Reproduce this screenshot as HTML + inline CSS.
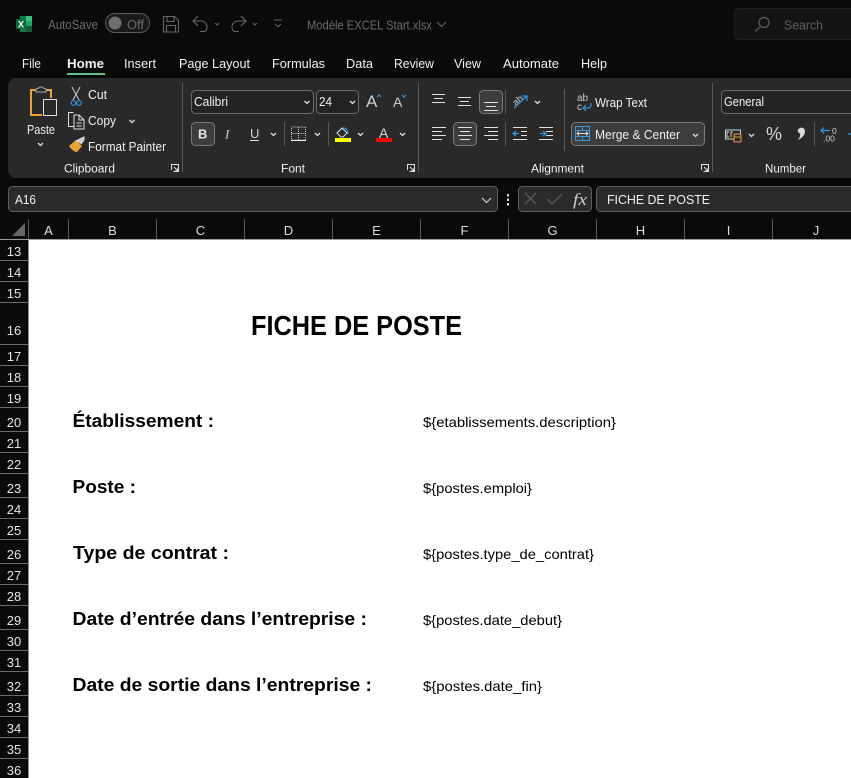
<!DOCTYPE html>
<html><head><meta charset="utf-8"><style>
html,body{margin:0;padding:0;background:#0a0a0a;width:851px;height:778px;overflow:hidden}
svg{display:block}
text{font-family:"Liberation Sans",sans-serif;fill:#f0f0f0;font-size:12px}
.d{fill:#6b6b6b}
.t{font-size:12.5px}
.g{font-size:11.5px}
.h{font-size:13px;fill:#dcdcdc;text-anchor:middle}
.r{font-size:13px;fill:#e4e4e4;text-anchor:middle}
.l{font-size:18px;font-weight:bold;fill:#000}
.v{font-size:14px;fill:#000}
.i{fill:none;stroke:#e0e0e0;stroke-width:1}
.c{fill:none;stroke:#e0e0e0;stroke-width:1.3}
.b{fill:none;stroke:#3a96dd;stroke-width:1.2}
</style></head><body>
<svg width="851" height="778" viewBox="0 0 851 778" xmlns="http://www.w3.org/2000/svg">
<rect width="851" height="778" fill="#0a0a0a"/>

<!-- title bar -->
<rect x="20" y="16" width="12" height="16" fill="#107c41"/><rect x="26" y="16" width="6" height="5" fill="#33c481"/><rect x="26" y="21" width="6" height="5" fill="#21a366"/><rect x="26" y="26" width="6" height="6" fill="#185c37"/>
<rect x="16" y="19" width="10" height="10" rx="1" fill="#0f6b3a"/>
<text x="18" y="27.500" style="font-size:9px;font-weight:bold;fill:#fff">X</text>
<text x="48" y="29" class="d t" textLength="50" lengthAdjust="spacingAndGlyphs">AutoSave</text>
<rect x="105.500" y="13.500" width="44" height="19" rx="9.500" fill="#1a1a1a" stroke="#5c5c5c"/>
<circle cx="115" cy="23" r="6.500" fill="#6f6f6f"/>
<text x="127" y="29" class="d t" textLength="17" lengthAdjust="spacingAndGlyphs">Off</text>
<g fill="none" stroke="#666" stroke-width="1.100">
<path d="M163.500 16.500h11l4 4v11.500h-15z M167 16.500v5h7v-5 M166.500 32v-6.500h9v6.500"/>
<path d="M198 16l-5 5 5 5 M193 21h8a6 6 0 0 1 4 10.500l-5 0"/>
<path d="M215 23l2 2 2-2"/>
<path d="M241 16l5 5-5 5 M246 21h-8a6 6 0 0 0-4 10.500l5 0"/>
<path d="M253 23l2 2 2-2"/>
<path d="M274 20h8 M275 24l3 2.500 3-2.500"/>
</g>
<text x="307" y="29.500" class="d t" textLength="125" lengthAdjust="spacingAndGlyphs">Modèle EXCEL Start.xlsx</text>
<path d="M437 22l4.500 4.500 4.500-4.500" fill="none" stroke="#666" stroke-width="1.100"/>
<rect x="734.500" y="8.500" width="130" height="31" rx="4" fill="#141414" stroke="#202020"/>
<g fill="none" stroke="#5e5e5e" stroke-width="1.200"><circle cx="764" cy="22.500" r="5"/><path d="M760 27l-5 4.500"/></g>
<text x="784" y="29.500" class="t" style="fill:#5e5e5e" textLength="39" lengthAdjust="spacingAndGlyphs">Search</text>

<!-- tabs -->
<text x="22" y="68" class="t" textLength="19" lengthAdjust="spacingAndGlyphs">File</text>
<text x="67" y="68" class="t" style="font-weight:bold" textLength="37" lengthAdjust="spacingAndGlyphs">Home</text>
<rect x="67" y="73" width="38" height="2" fill="#5fc28b"/>
<text x="124" y="68" class="t" textLength="32" lengthAdjust="spacingAndGlyphs">Insert</text>
<text x="179" y="68" class="t" textLength="71" lengthAdjust="spacingAndGlyphs">Page Layout</text>
<text x="272" y="68" class="t" textLength="53" lengthAdjust="spacingAndGlyphs">Formulas</text>
<text x="346" y="68" class="t" textLength="27" lengthAdjust="spacingAndGlyphs">Data</text>
<text x="394" y="68" class="t" textLength="40" lengthAdjust="spacingAndGlyphs">Review</text>
<text x="454" y="68" class="t" textLength="27" lengthAdjust="spacingAndGlyphs">View</text>
<text x="503" y="68" class="t" textLength="56" lengthAdjust="spacingAndGlyphs">Automate</text>
<text x="581" y="68" class="t" textLength="26" lengthAdjust="spacingAndGlyphs">Help</text>

<!-- ribbon -->
<rect x="8" y="78" width="860" height="100" rx="8" fill="#292929"/>
<g stroke="#5a5a5a"><path d="M182.500 83v89 M418.500 83v89 M712.500 83v89 M564.500 89v62 M505.500 90v24 M505.500 122v24 M284.500 122v24 M328.500 122v24 M814.500 122v24"/></g>

<!-- clipboard -->
<path d="M36 90h-5v25h11 M46 90h5v8" fill="none" stroke="#e8a33d" stroke-width="2"/>
<path d="M36 92v-3l3-1 1-1h2l1 1 3 1v3z" fill="#292929" stroke="#aaa"/>
<rect x="43.500" y="99.500" width="13" height="16" fill="#292929" stroke="#e0e0e0"/>
<text x="27" y="134" class="t" textLength="28" lengthAdjust="spacingAndGlyphs">Paste</text>
<path d="M38 143l2.500 2.500 2.500-2.500" class="c"/>
<path d="M72 87l7 13 M80 87l-7 13" fill="none" stroke="#ccc"/><circle cx="73.500" cy="103" r="2.300" class="b"/><circle cx="79" cy="103" r="2.300" class="b"/>
<text x="88" y="99" class="t" textLength="19" lengthAdjust="spacingAndGlyphs">Cut</text>
<path d="M74 126.500h-5.500v-14h5 M74 115h5l5 5v9h-10z M79 115v5h5 M76.500 123h5 M76.500 126h5" class="i"/>
<text x="88" y="125" class="t" textLength="28" lengthAdjust="spacingAndGlyphs">Copy</text>
<path d="M129.500 120l2.500 2.500 2.500-2.500" class="c"/>
<path d="M69 146l7-6 6 6-5 6c-3 0-6-3-8-6z" fill="#e8a33d"/>
<path d="M76 141l6-3 2-1 0 3-3 4" fill="#ccc" stroke="#ddd"/>
<text x="88" y="151" class="t" textLength="78" lengthAdjust="spacingAndGlyphs">Format Painter</text>
<text x="64" y="172.500" class="g" textLength="51" lengthAdjust="spacingAndGlyphs">Clipboard</text>
<path d="M171.500 170v-5.500h7v7h-5 M174 167l4 4 M178 168v3h-3" class="i"/>

<!-- font -->
<rect x="191.500" y="90.500" width="122" height="23" rx="4" fill="#232323" stroke="#6b6b6b"/>
<text x="194" y="106" class="t" textLength="34" lengthAdjust="spacingAndGlyphs">Calibri</text>
<path d="M304.500 101l2.500 2.500 2.500-2.500" class="c"/>
<rect x="316.500" y="90.500" width="42" height="23" rx="4" fill="#232323" stroke="#6b6b6b"/>
<text x="319" y="106" class="t" textLength="13" lengthAdjust="spacingAndGlyphs">24</text>
<path d="M350 101l2.500 2.500 2.500-2.500" class="c"/>
<text x="366" y="107" style="font-size:17px;fill:#cfcfcf">A</text><path d="M377 97l2-2 2 2" class="b"/>
<text x="393" y="107" style="font-size:14px;fill:#cfcfcf">A</text><path d="M402 95l2 2 2-2" class="b"/>
<rect x="191.500" y="122.500" width="23" height="23" rx="4" fill="#3d3d3d" stroke="#7a7a7a"/>
<text x="198" y="138.500" style="font-size:13px;font-weight:bold;fill:#e8e8e8">B</text>
<text x="225" y="138.500" style="font-size:13px;font-style:italic;fill:#d0d0d0;font-family:'Liberation Serif',serif">I</text>
<text x="250" y="138" style="font-size:13px;fill:#d0d0d0">U</text><path d="M250 140.500h9" class="i"/>
<path d="M271 133l2.500 2.500 2.500-2.500 M315 133l2.500 2.500 2.500-2.500 M358 133l2.500 2.500 2.500-2.500 M400 133l2.500 2.500 2.500-2.500" class="c"/>
<path d="M291.500 127h14v13h-14z M298.500 127v13 M291.500 133.500h14" fill="none" stroke="#d0d0d0" stroke-dasharray="1 1"/><path d="M291 140.500h15" stroke="#f0f0f0"/>
<path d="M337 133l5-5 5 5-4 4h-2z" fill="none" stroke="#e0e0e0"/><path d="M343 128c3 0 5 2 5 6" class="b"/>
<rect x="335" y="138" width="16" height="4" fill="#ffff00"/>
<text x="379" y="138" style="font-size:14px;fill:#d8d8d8">A</text>
<rect x="376" y="138" width="16" height="4" fill="#ff0000"/>
<text x="281" y="172.500" class="g" textLength="24" lengthAdjust="spacingAndGlyphs">Font</text>
<path d="M407.500 170v-5.500h7v7h-5 M410 167l4 4 M414 168v3h-3" class="i"/>

<!-- alignment -->
<rect x="479.500" y="90.500" width="23" height="23" rx="4" fill="#3d3d3d" stroke="#7a7a7a"/>
<g class="i">
<path d="M432 94.500h13 M434 98.500h9 M432 102.500h13"/>
<path d="M458 97.500h13 M460 101.500h9 M458 105.500h13"/>
<path d="M484 102.500h14 M486 106.500h10 M484 110.500h14"/>
</g>
<text x="512" y="104" style="font-size:9.500px;fill:#ccc" transform="rotate(-40 517 100)">ab</text>
<path d="M514 108l13-12 M522 96h5v5" class="b"/>
<path d="M535 101l2.500 2.500 2.500-2.500" class="c"/>
<rect x="453.500" y="122.500" width="23" height="23" rx="4" fill="#3d3d3d" stroke="#7a7a7a"/>
<g class="i">
<path d="M432 127.500h14 M432 131.500h10 M432 135.500h14 M432 139.500h10"/>
<path d="M458 127.500h14 M460 131.500h10 M458 135.500h14 M460 139.500h10"/>
<path d="M484 127.500h14 M488 131.500h10 M484 135.500h14 M488 139.500h10"/>
<path d="M513 127.500h14 M521 131.500h6 M521 135.500h6 M513 139.500h14"/>
<path d="M539 127.500h14 M546 131.500h7 M546 135.500h7 M539 139.500h14"/>
</g>
<path d="M519 133.500h-5 M516 131l-3 2.500 3 2.500 M540 133.500h5 M543 131l3 2.500-3 2.500" class="b"/>
<text x="577" y="101" style="font-size:10px;fill:#ccc">ab</text><text x="577" y="110" style="font-size:10px;fill:#ccc">c</text>
<path d="M591 103v2a3 3 0 0 1-3 3h-4 M586 105l-3 3 3 3" class="b"/>
<text x="595" y="107" class="t" textLength="52" lengthAdjust="spacingAndGlyphs">Wrap Text</text>
<rect x="571.500" y="122.500" width="133" height="23" rx="4" fill="#3d3d3d" stroke="#7a7a7a"/>
<path d="M575.500 126.500h14v14h-14z M575.500 130.500h14 M575.500 136.500h14 M582.500 126.500v4 M582.500 136.500v4" fill="none" stroke="#3a96dd"/>
<path d="M577 133.500h11 M579 131.500l-2 2 2 2 M586 131.500l2 2-2 2" fill="none" stroke="#e0e0e0"/>
<text x="595" y="139" class="t" textLength="85" lengthAdjust="spacingAndGlyphs">Merge &amp; Center</text>
<path d="M693 134l2.500 2.500 2.500-2.500" class="c"/>
<text x="531" y="172.500" class="g" textLength="53" lengthAdjust="spacingAndGlyphs">Alignment</text>
<path d="M701.500 170v-5.500h7v7h-5 M704 167l4 4 M708 168v3h-3" class="i"/>

<!-- number -->
<rect x="721.500" y="90.500" width="140" height="23" rx="4" fill="#232323" stroke="#6b6b6b"/>
<text x="724" y="106" class="t" textLength="40" lengthAdjust="spacingAndGlyphs">General</text>
<rect x="725.500" y="130" width="15" height="9" fill="none" stroke="#d0d0d0"/>
<path d="M729 132h-2v5h2 M733 132h-2v5" fill="none" stroke="#d0d0d0"/>
<rect x="734" y="134" width="7" height="8" rx="1" fill="#292929" stroke="#e8a33d"/><path d="M734 137h7" stroke="#e8a33d"/>
<path d="M749 134l2.500 2.500 2.500-2.500" class="c"/>
<text x="766" y="140" style="font-size:18px;fill:#d8d8d8" textLength="16" lengthAdjust="spacingAndGlyphs">%</text>
<path d="M800 128a3.500 3.500 0 0 1 5 3c0 4-3 7-7 9 2-3 2.500-5 2-6.500-3-1-3-4.500 0-5.500z" fill="#d8d8d8"/>
<path d="M830 130.500h-9 M824 127.500l-3 3 3 3" class="b"/>
<text x="832" y="134" style="font-size:8.500px;fill:#d0d0d0">0</text>
<text x="823" y="141.500" style="font-size:8.500px;fill:#d0d0d0">.00</text>
<path d="M848 134h3" class="b"/>
<text x="765" y="172.500" class="g" textLength="41" lengthAdjust="spacingAndGlyphs">Number</text>

<!-- formula bar -->
<rect x="8.500" y="186.500" width="489" height="25" rx="4" fill="#2b2b2b" stroke="#5e5e5e"/>
<text x="15" y="204" class="t" textLength="21" lengthAdjust="spacingAndGlyphs">A16</text>
<path d="M482 198l4.500 4.500 4.500-4.500" fill="none" stroke="#d0d0d0" stroke-width="1.200"/>
<g fill="#d8d8d8"><rect x="507" y="194" width="2" height="2.500"/><rect x="507" y="198.500" width="2" height="2.500"/><rect x="507" y="203" width="2" height="2.500"/></g>
<rect x="518.500" y="186.500" width="73" height="25" rx="4" fill="#2b2b2b" stroke="#5e5e5e"/>
<path d="M525 193l11 11 M536 193l-11 11 M547 199l5 5 10-10" fill="none" stroke="#666" stroke-width="1.100"/>
<text x="573" y="205" style="font-family:'Liberation Serif',serif;font-style:italic;font-size:17px;fill:#cfcfcf" textLength="14" lengthAdjust="spacingAndGlyphs">fx</text>
<rect x="596.500" y="186.500" width="270" height="25" rx="4" fill="#2b2b2b" stroke="#5e5e5e"/>
<text x="607" y="204" class="t" textLength="103" lengthAdjust="spacingAndGlyphs">FICHE DE POSTE</text>

<!-- column headers -->
<path d="M25 236v-13l-13 13z" fill="#666"/>
<g stroke="#5a5a5a"><path d="M28.500 219v20 M68.500 219v20 M156.500 219v20 M244.500 219v20 M332.500 219v20 M420.500 219v20 M508.500 219v20 M596.500 219v20 M684.500 219v20 M772.500 219v20"/></g>
<text x="48.500" y="235" class="h">A</text><text x="112.500" y="235" class="h">B</text><text x="200.500" y="235" class="h">C</text><text x="288.500" y="235" class="h">D</text><text x="376.500" y="235" class="h">E</text><text x="464.500" y="235" class="h">F</text><text x="552.500" y="235" class="h">G</text><text x="640.500" y="235" class="h">H</text><text x="728.500" y="235" class="h">I</text><text x="816" y="235" class="h">J</text>

<!-- sheet -->
<rect x="29" y="240" width="822" height="538" fill="#fff"/>
<rect x="28" y="239" width="1" height="539" fill="#8a8a8a"/>
<rect x="0" y="239" width="851" height="1" fill="#a0a0a0"/>

<!-- row headers -->
<g stroke="#6a6a6a"><path d="M0 260.500h28 M0 281.500h28 M0 302.500h28 M0 344.500h28 M0 365.500h28 M0 386.500h28 M0 407.500h28 M0 431.500h28 M0 452.500h28 M0 473.500h28 M0 497.500h28 M0 518.500h28 M0 539.500h28 M0 563.500h28 M0 584.500h28 M0 605.500h28 M0 629.500h28 M0 650.500h28 M0 671.500h28 M0 695.500h28 M0 716.500h28 M0 737.500h28 M0 758.500h28"/></g>
<text x="14" y="256" class="r">13</text><text x="14" y="277" class="r">14</text><text x="14" y="298" class="r">15</text><text x="14" y="335" class="r">16</text><text x="14" y="361" class="r">17</text><text x="14" y="382" class="r">18</text><text x="14" y="403" class="r">19</text><text x="14" y="427" class="r">20</text><text x="14" y="448" class="r">21</text><text x="14" y="469" class="r">22</text><text x="14" y="493" class="r">23</text><text x="14" y="514" class="r">24</text><text x="14" y="535" class="r">25</text><text x="14" y="559" class="r">26</text><text x="14" y="580" class="r">27</text><text x="14" y="601" class="r">28</text><text x="14" y="625" class="r">29</text><text x="14" y="646" class="r">30</text><text x="14" y="667" class="r">31</text><text x="14" y="691" class="r">32</text><text x="14" y="712" class="r">33</text><text x="14" y="733" class="r">34</text><text x="14" y="754" class="r">35</text><text x="14" y="775" class="r">36</text>

<!-- content -->
<text x="251" y="335" style="font-size:28px;font-weight:bold;fill:#000" textLength="211" lengthAdjust="spacingAndGlyphs">FICHE DE POSTE</text>
<text x="72.500" y="427" class="l" textLength="141.500" lengthAdjust="spacingAndGlyphs">Établissement :</text>
<text x="72.500" y="493" class="l" textLength="63.500" lengthAdjust="spacingAndGlyphs">Poste :</text>
<text x="73" y="559" class="l" textLength="156" lengthAdjust="spacingAndGlyphs">Type de contrat :</text>
<text x="72.500" y="625" class="l" textLength="294.500" lengthAdjust="spacingAndGlyphs">Date d’entrée dans l’entreprise :</text>
<text x="72.500" y="691" class="l" textLength="299.500" lengthAdjust="spacingAndGlyphs">Date de sortie dans l’entreprise :</text>
<text x="423" y="427" class="v" textLength="193" lengthAdjust="spacingAndGlyphs">${etablissements.description}</text>
<text x="423" y="493" class="v" textLength="109" lengthAdjust="spacingAndGlyphs">${postes.emploi}</text>
<text x="423" y="559" class="v" textLength="171" lengthAdjust="spacingAndGlyphs">${postes.type_de_contrat}</text>
<text x="423" y="625" class="v" textLength="139" lengthAdjust="spacingAndGlyphs">${postes.date_debut}</text>
<text x="423" y="691" class="v" textLength="119" lengthAdjust="spacingAndGlyphs">${postes.date_fin}</text>
</svg>
</body></html>
